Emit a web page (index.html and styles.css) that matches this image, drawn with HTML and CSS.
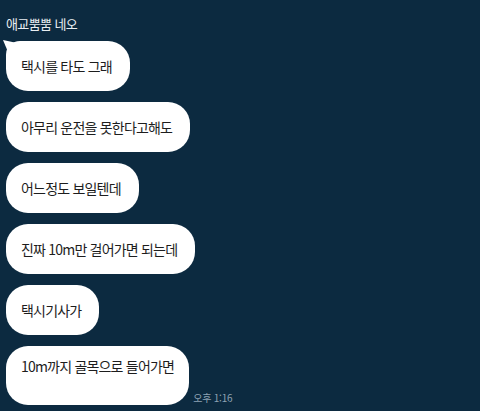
FILE: index.html
```html
<!DOCTYPE html>
<html lang="ko">
<head>
  <meta charset="UTF-8" />
  <meta name="viewport" content="width=device-width, initial-scale=1.0" />
  <title>애교뿜뿜 네오</title>
  <link rel="stylesheet" href="styles.css">
</head>
<body>
  <div class="chat">
    <div class="sender">애교뿜뿜 네오</div>
    <div class="messages">
      <div class="row"><div class="bubble first">택시를 타도 그래</div></div>
      <div class="row"><div class="bubble">아무리 운전을 못한다고해도</div></div>
      <div class="row"><div class="bubble">어느정도 보일텐데</div></div>
      <div class="row"><div class="bubble">진짜 10m만 걸어가면 되는데</div></div>
      <div class="row"><div class="bubble">택시기사가</div></div>
      <div class="row">
        <div class="bubble last">10m까지 골목으로 들어가면</div>
        <span class="time">오후 1:16</span>
      </div>
    </div>
  </div>
</body>
</html>
```

FILE: styles.css
```css
body {
  margin: 0;
  background-color: #0c2a40;
  font-family: "Noto Sans CJK KR", "Noto Sans", sans-serif;
}
.chat {
  padding: 14px 6px 0 6px;
}
.sender {
  color: #e9eef2;
  font-size: 13px;
  letter-spacing: -0.6px;
  line-height: 20px;
  margin-bottom: 7px;
}
.messages {
  display: flex;
  flex-direction: column;
  gap: 11px;
}
.row {
  display: flex;
  align-items: flex-end;
  gap: 4px;
}
.bubble {
  position: relative;
  background-color: #fff;
  color: #1d1d1d;
  font-size: 14px;
  letter-spacing: -0.8px;
  line-height: 20px;
  padding: 15px 18px 15px 15px;
  border-radius: 22px;
}
.bubble.first {
  border-top-left-radius: 14px;
}
.bubble.first::before {
  content: "";
  position: absolute;
  left: -3px;
  top: -1px;
  width: 14px;
  height: 10px;
  background-color: #fff;
  clip-path: polygon(0 0, 100% 30%, 100% 100%, 30% 100%);
}
.bubble.last {
  padding-top: 10px;
  padding-bottom: 29px;
  padding-right: 15px;
}
.time {
  color: #8ea2b3;
  font-size: 10px;
  letter-spacing: -0.2px;
  line-height: 14px;
}
```
